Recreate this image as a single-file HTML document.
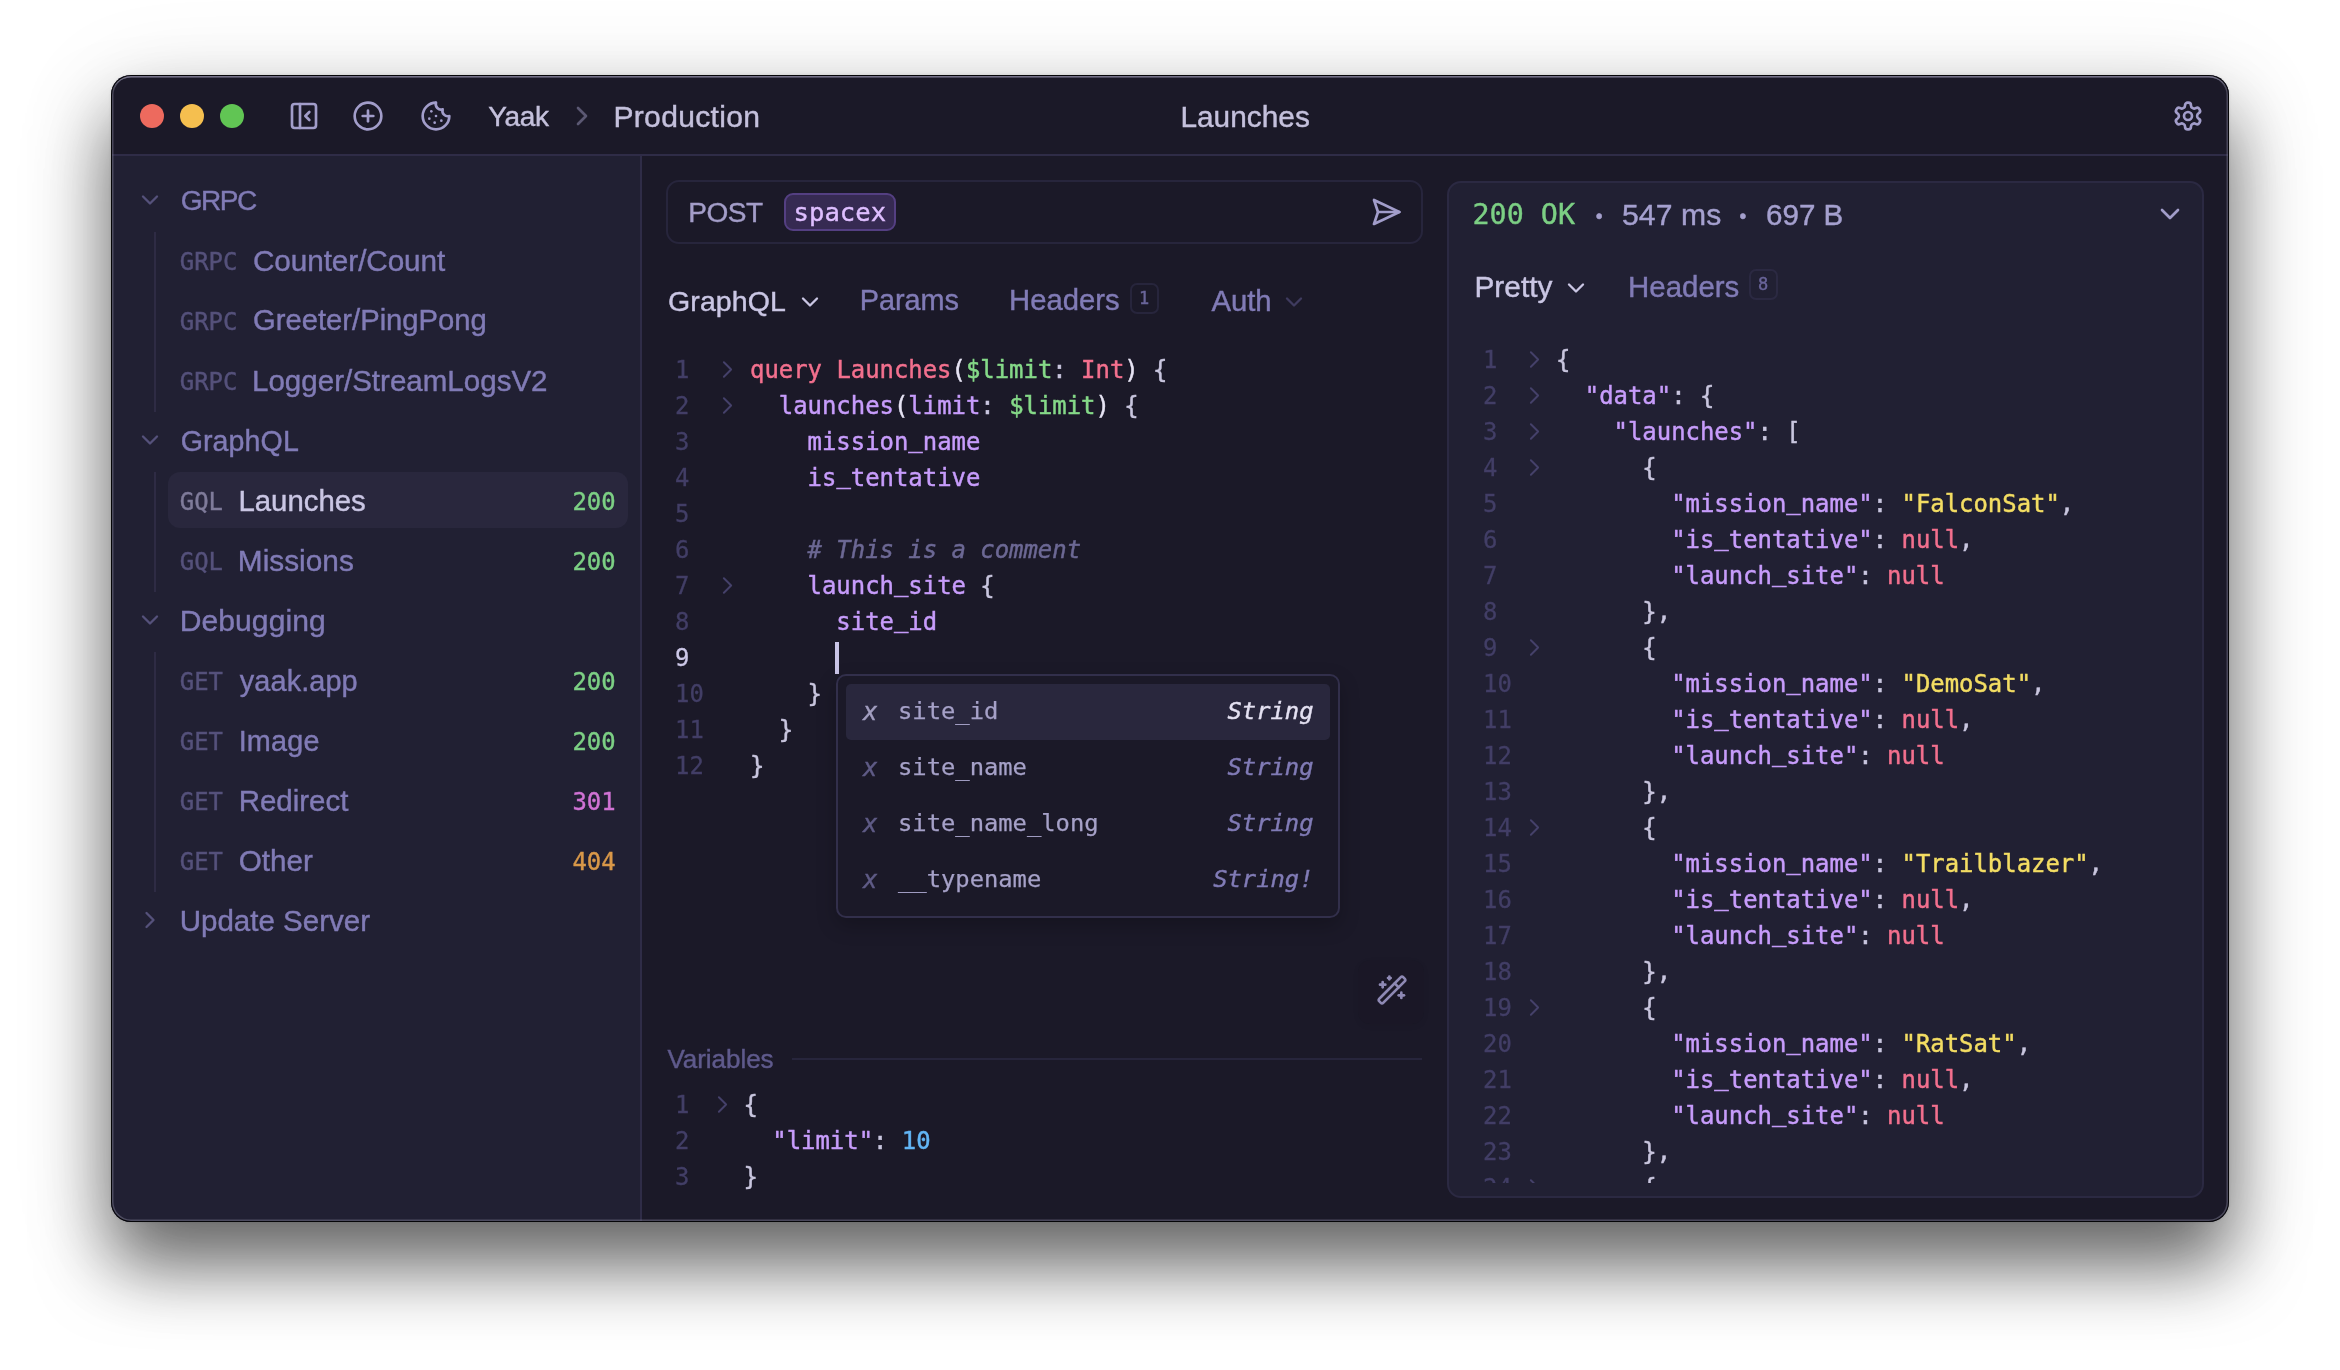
<!DOCTYPE html>
<html lang="en"><head><meta charset="utf-8"><title>Yaak</title>
<style>
*{box-sizing:border-box;margin:0;padding:0}
html,body{width:2340px;height:1370px;overflow:hidden;background:#fff}
body{font-family:"Liberation Sans", sans-serif;position:relative}
#shadow{position:absolute;left:111px;top:75px;width:2118px;height:1147px;border-radius:20px;
  box-shadow:0 44px 70px rgba(0,0,0,.55), 0 20px 100px rgba(0,0,0,.15), 0 0 3px rgba(0,0,0,.12);}
#win{position:absolute;left:111px;top:75px;width:2118px;height:1147px;border-radius:20px;overflow:hidden;background:#1b1928;will-change:transform}
#winedge{position:absolute;left:111px;top:75px;width:2118px;height:1147px;border-radius:20px;pointer-events:none;
  box-shadow:inset 0 0 0 1px #050508, inset 0 2.5px 0 0 rgba(135,133,155,.7), inset 0 0 0 2.5px rgba(120,118,140,.5);}
#hdr{position:absolute;left:0;top:0;width:2118px;height:81px;border-bottom:2px solid #2f2c47;background:#1b1928}
#side{position:absolute;left:0;top:81px;width:531px;height:1066px;background:#212033;border-right:2px solid #2f2c47}
.t{position:absolute;white-space:pre;line-height:1;-webkit-text-stroke:.42px currentColor}
.mono{font-family:"DejaVu Sans Mono", "Liberation Mono", monospace;-webkit-text-stroke:.4px currentColor}
.dot{position:absolute;width:24px;height:24px;border-radius:50%;top:29px}
.box{position:absolute}
svg{position:absolute;overflow:visible;fill:none;stroke-linecap:round;stroke-linejoin:round}
.code{position:absolute;font-family:"DejaVu Sans Mono", "Liberation Mono", monospace;font-size:23.92px;line-height:36px;white-space:pre;color:#c9c6df;-webkit-text-stroke:.45px currentColor}
.code div{height:36px}
.ln{position:absolute;font-family:"DejaVu Sans Mono", "Liberation Mono", monospace;font-size:23.92px;line-height:36px;white-space:pre;color:#423e66;-webkit-text-stroke:.3px currentColor}
.ln div{height:36px}
.u{font-style:normal;position:relative;top:-3px}
.w{color:#e7e4f4}.k{color:#f3708e}.p{color:#c79cfb}.g{color:#85d988}.s{color:#f3dd63}.n{color:#62b5f5}.c{color:#6c6894;font-style:italic}
</style></head>
<body>
<div id="shadow"></div>
<div id="win">
<div id="hdr"></div>
<div id="side"></div>
<div class="dot" style="left:29px;background:#ed6a5e"></div>
<div class="dot" style="left:69px;background:#f5bf4f"></div>
<div class="dot" style="left:109px;background:#61c554"></div>
<svg style="left:177.00px;top:25.00px" width="32" height="32" viewBox="0 0 24 24" stroke="#a29dca" stroke-width="2"><rect width="18" height="18" x="3" y="3" rx="2"/><path d="M9 3v18"/><path d="m16 15-3-3 3-3"/></svg>
<svg style="left:241.00px;top:25.00px" width="32" height="32" viewBox="0 0 24 24" stroke="#a29dca" stroke-width="2"><circle cx="12" cy="12" r="10"/><path d="M8 12h8"/><path d="M12 8v8"/></svg>
<svg style="left:309.00px;top:25.00px" width="32" height="32" viewBox="0 0 24 24" stroke="#a29dca" stroke-width="2"><path d="M12 2a10 10 0 1 0 10 10 4 4 0 0 1-5-5 4 4 0 0 1-5-5"/><path d="M8.5 8.5v.01"/><path d="M16 15.5v.01"/><path d="M12 12v.01"/><path d="M11 17v.01"/><path d="M7 14v.01"/></svg>
<div class="t " style="left:377.20px;top:27.99px;font-size:28.02px;color:#c4c0dc;letter-spacing:-0.356px;">Yaak</div>
<svg style="left:455.20px;top:25.00px" width="32" height="32" viewBox="0 0 24 24" stroke="#5b5873" stroke-width="2"><path d="m9 18 6-6-6-6"/></svg>
<div class="t " style="left:502.40px;top:26.95px;font-size:30.09px;color:#c4c0dc;letter-spacing:0.315px;">Production</div>
<div class="t " style="left:1069.40px;top:27.09px;font-size:29.81px;color:#c4c0dc;letter-spacing:0.025px;">Launches</div>
<svg style="left:2061.00px;top:25.00px" width="32" height="32" viewBox="0 0 24 24" stroke="#a29dca" stroke-width="2"><path d="M12.22 2h-.44a2 2 0 0 0-2 2v.18a2 2 0 0 1-1 1.73l-.43.25a2 2 0 0 1-2 0l-.15-.08a2 2 0 0 0-2.73.73l-.22.38a2 2 0 0 0 .73 2.73l.15.1a2 2 0 0 1 1 1.72v.51a2 2 0 0 1-1 1.74l-.15.09a2 2 0 0 0-.73 2.73l.22.38a2 2 0 0 0 2.73.73l.15-.08a2 2 0 0 1 2 0l.43.25a2 2 0 0 1 1 1.73V20a2 2 0 0 0 2 2h.44a2 2 0 0 0 2-2v-.18a2 2 0 0 1 1-1.73l.43-.25a2 2 0 0 1 2 0l.15.08a2 2 0 0 0 2.73-.73l.22-.39a2 2 0 0 0-.73-2.73l-.15-.08a2 2 0 0 1-1-1.74v-.5a2 2 0 0 1 1-1.74l.15-.09a2 2 0 0 0 .73-2.73l-.22-.38a2 2 0 0 0-2.73-.73l-.15.08a2 2 0 0 1-2 0l-.43-.25a2 2 0 0 1-1-1.73V4a2 2 0 0 0-2-2z"/><circle cx="12" cy="12" r="3"/></svg>
<div class="box" style="left:57px;top:397px;width:460px;height:56px;background:#29273d;border-radius:12px"></div>
<div class="box" style="left:42.5px;top:157px;width:2.0px;height:180px;background:#2e2b44"></div>
<div class="box" style="left:42.5px;top:397px;width:2.0px;height:120px;background:#2e2b44"></div>
<div class="box" style="left:42.5px;top:577px;width:2.0px;height:240px;background:#2e2b44"></div>
<svg style="left:25.00px;top:111.00px" width="28" height="28" viewBox="0 0 24 24" stroke="#55517b" stroke-width="2"><path d="m6 9 6 6 6-6"/></svg>
<div class="t " style="left:69.70px;top:111.99px;font-size:28.02px;color:#817bb6;letter-spacing:-1.470px;">GRPC</div>
<div class="t mono" style="left:68.80px;top:175.84px;font-size:23.92px;color:#55517b;">GRPC</div>
<div class="t " style="left:142.00px;top:171.15px;font-size:29.71px;color:#817bb6;letter-spacing:-0.078px;">Counter/Count</div>
<div class="t mono" style="left:68.80px;top:235.84px;font-size:23.92px;color:#55517b;">GRPC</div>
<div class="t " style="left:142.00px;top:231.38px;font-size:29.23px;color:#817bb6;letter-spacing:-0.003px;">Greeter/PingPong</div>
<div class="t mono" style="left:68.80px;top:295.84px;font-size:23.92px;color:#55517b;">GRPC</div>
<div class="t " style="left:141.00px;top:291.24px;font-size:29.53px;color:#817bb6;letter-spacing:0.010px;">Logger/StreamLogsV2</div>
<svg style="left:25.00px;top:351.00px" width="28" height="28" viewBox="0 0 24 24" stroke="#55517b" stroke-width="2"><path d="m6 9 6 6 6-6"/></svg>
<div class="t " style="left:69.70px;top:351.71px;font-size:28.58px;color:#817bb6;letter-spacing:0.091px;">GraphQL</div>
<div class="t mono" style="left:68.80px;top:415.84px;font-size:23.92px;color:#7f7b9a;">GQL</div>
<div class="t " style="left:127.40px;top:411.31px;font-size:29.38px;color:#cac6e4;letter-spacing:-0.001px;">Launches</div>
<div class="t mono" style="left:461.40px;top:415.84px;font-size:23.92px;color:#7ccf84;">200</div>
<div class="t mono" style="left:68.80px;top:475.84px;font-size:23.92px;color:#55517b;">GQL</div>
<div class="t " style="left:126.80px;top:471.11px;font-size:29.79px;color:#817bb6;letter-spacing:0.022px;">Missions</div>
<div class="t mono" style="left:461.40px;top:475.84px;font-size:23.92px;color:#7ccf84;">200</div>
<svg style="left:25.00px;top:531.00px" width="28" height="28" viewBox="0 0 24 24" stroke="#55517b" stroke-width="2"><path d="m6 9 6 6 6-6"/></svg>
<div class="t " style="left:68.70px;top:530.96px;font-size:30.09px;color:#817bb6;letter-spacing:0.066px;">Debugging</div>
<div class="t mono" style="left:68.80px;top:595.84px;font-size:23.92px;color:#55517b;">GET</div>
<div class="t " style="left:128.80px;top:591.56px;font-size:28.88px;color:#817bb6;letter-spacing:0.095px;">yaak.app</div>
<div class="t mono" style="left:461.40px;top:595.84px;font-size:23.92px;color:#7ccf84;">200</div>
<div class="t mono" style="left:68.80px;top:655.84px;font-size:23.92px;color:#55517b;">GET</div>
<div class="t " style="left:127.70px;top:651.60px;font-size:28.8px;color:#817bb6;letter-spacing:0.170px;">Image</div>
<div class="t mono" style="left:461.40px;top:655.84px;font-size:23.92px;color:#7ccf84;">200</div>
<div class="t mono" style="left:68.80px;top:715.84px;font-size:23.92px;color:#55517b;">GET</div>
<div class="t " style="left:127.70px;top:711.27px;font-size:29.46px;color:#817bb6;letter-spacing:0.001px;">Redirect</div>
<div class="t mono" style="left:461.40px;top:715.84px;font-size:23.92px;color:#d072d4;">301</div>
<div class="t mono" style="left:68.80px;top:775.84px;font-size:23.92px;color:#55517b;">GET</div>
<div class="t " style="left:127.80px;top:771.18px;font-size:29.64px;color:#817bb6;letter-spacing:0.018px;">Other</div>
<div class="t mono" style="left:461.40px;top:775.84px;font-size:23.92px;color:#d99849;">404</div>
<svg style="left:25.00px;top:831.00px" width="28" height="28" viewBox="0 0 24 24" stroke="#55517b" stroke-width="2"><path d="m9 18 6-6-6-6"/></svg>
<div class="t " style="left:68.70px;top:831.24px;font-size:29.52px;color:#817bb6;letter-spacing:0.002px;">Update Server</div>
<div class="box" style="left:555px;top:105px;width:757px;height:64px;border:2px solid #27253c;border-radius:13px"></div>
<div class="t " style="left:577.20px;top:123.99px;font-size:28.02px;color:#a39dc8;letter-spacing:-0.488px;">POST</div>
<div class="box" style="left:673px;top:118px;width:112px;height:38px;background:#362a52;border:2px solid #543f82;border-radius:9px"></div>
<div class="t mono" style="left:682.60px;top:125.20px;font-size:25.6px;color:#debeff;">spacex</div>
<svg style="left:1258.50px;top:121.00px" width="32" height="32" viewBox="0 0 24 24" stroke="#a29dca" stroke-width="2"><path d="m3 3 3 9-3 9 19-9Z"/><path d="M6 12h16"/></svg>
<div class="t " style="left:557.10px;top:211.55px;font-size:28.51px;color:#cac6e4;letter-spacing:0.087px;">GraphQL</div>
<svg style="left:685.30px;top:213.00px" width="28" height="28" viewBox="0 0 24 24" stroke="#cac6e4" stroke-width="2"><path d="m6 9 6 6 6-6"/></svg>
<div class="t " style="left:748.80px;top:211.38px;font-size:28.85px;color:#817bb6;letter-spacing:-0.051px;">Params</div>
<div class="t " style="left:898.10px;top:211.18px;font-size:29.24px;color:#817bb6;letter-spacing:-0.014px;">Headers</div>
<div class="box" style="left:1019px;top:208px;width:29px;height:31px;border:2px solid #27253c;border-radius:7px"></div>
<div class="t mono" style="left:1028.00px;top:214.50px;font-size:17px;color:#6a659a;">1</div>
<div class="t " style="left:1100.40px;top:211.15px;font-size:29.31px;color:#817bb6;letter-spacing:-0.025px;">Auth</div>
<svg style="left:1169.30px;top:213.00px" width="28" height="28" viewBox="0 0 24 24" stroke="#3f3b5f" stroke-width="2"><path d="m6 9 6 6 6-6"/></svg>
<div class="ln" style="left:564px;top:277px"><div>1</div><div>2</div><div>3</div><div>4</div><div>5</div><div>6</div><div>7</div><div>8</div><div style=color:#cdc8e8>9</div><div>10</div><div>11</div><div>12</div></div>
<div class="code" style="left:639px;top:277px"><div><span class="k">query</span> <span class="k">Launches</span><span class="w">(</span><span class="g">$limit</span>: <span class="k">Int</span><span class="w">)</span> {</div><div>  <span class="p">launches</span><span class="w">(</span><span class="p">limit</span>: <span class="g">$limit</span><span class="w">)</span> {</div><div>    <span class="p">mission<i class="u">_</i>name</span></div><div>    <span class="p">is<i class="u">_</i>tentative</span></div><div> </div><div>    <span class="c"># This is a comment</span></div><div>    <span class="p">launch<i class="u">_</i>site</span> {</div><div>      <span class="p">site<i class="u">_</i>id</span></div><div>      </div><div>    }</div><div>  }</div><div>}</div></div>
<svg style="left:602.00px;top:279.50px" width="29" height="29" viewBox="0 0 24 24" stroke="#45416a" stroke-width="1.6"><path d="m9 18 6-6-6-6"/></svg>
<svg style="left:602.00px;top:315.50px" width="29" height="29" viewBox="0 0 24 24" stroke="#45416a" stroke-width="1.6"><path d="m9 18 6-6-6-6"/></svg>
<svg style="left:602.00px;top:495.50px" width="29" height="29" viewBox="0 0 24 24" stroke="#45416a" stroke-width="1.6"><path d="m9 18 6-6-6-6"/></svg>
<div class="box" style="left:724px;top:567px;width:4px;height:32px;background:#c9c4e6"></div>
<div class="box" style="left:725px;top:599px;width:504px;height:244px;background:#1b1928;border:2px solid #322f4b;border-radius:10px;box-shadow:0 8px 20px rgba(0,0,0,.22)"></div>
<div class="box" style="left:735px;top:609px;width:484px;height:56px;background:#29273d;border-radius:5px"></div>
<div class="t mono" style="left:752.00px;top:625.00px;font-size:24px;color:#a29ec0;font-style:italic;">x</div>
<div class="t mono" style="left:787.00px;top:625.10px;font-size:23.8px;color:#a6a1c8;-webkit-text-stroke:.25px currentColor;">site_id</div>
<div class="t mono" style="left:1116.52px;top:625.10px;font-size:23.8px;color:#e4e1f2;font-style:italic;">String</div>
<div class="t mono" style="left:752.00px;top:681.00px;font-size:24px;color:#5f5b86;font-style:italic;">x</div>
<div class="t mono" style="left:787.00px;top:681.10px;font-size:23.8px;color:#a6a1c8;-webkit-text-stroke:.25px currentColor;">site_name</div>
<div class="t mono" style="left:1116.52px;top:681.10px;font-size:23.8px;color:#817bb6;font-style:italic;">String</div>
<div class="t mono" style="left:752.00px;top:737.00px;font-size:24px;color:#5f5b86;font-style:italic;">x</div>
<div class="t mono" style="left:787.00px;top:737.10px;font-size:23.8px;color:#a6a1c8;-webkit-text-stroke:.25px currentColor;">site_name_long</div>
<div class="t mono" style="left:1116.52px;top:737.10px;font-size:23.8px;color:#817bb6;font-style:italic;">String</div>
<div class="t mono" style="left:752.00px;top:793.00px;font-size:24px;color:#5f5b86;font-style:italic;">x</div>
<div class="t mono" style="left:787.00px;top:793.10px;font-size:23.8px;color:#a6a1c8;-webkit-text-stroke:.25px currentColor;">__typename</div>
<div class="t mono" style="left:1102.19px;top:793.10px;font-size:23.8px;color:#817bb6;font-style:italic;">String!</div>
<div class="box" style="left:1247px;top:885px;width:66px;height:64px;background:rgba(10,8,20,.06);border-radius:12px;box-shadow:0 2px 6px rgba(0,0,0,.05)"></div>
<svg style="left:1265.00px;top:899.00px" width="32" height="32" viewBox="0 0 24 24" stroke="#8e89b4" stroke-width="2"><path d="m21.64 3.64-1.28-1.28a1.21 1.21 0 0 0-1.72 0L2.36 18.64a1.21 1.21 0 0 0 0 1.72l1.28 1.28a1.2 1.2 0 0 0 1.72 0L21.64 5.36a1.2 1.2 0 0 0 0-1.72"/><path d="m14 7 3 3"/><path d="M5 6v4"/><path d="M19 14v4"/><path d="M10 2v2"/><path d="M7 8H3"/><path d="M21 16h-4"/><path d="M11 3H9"/></svg>
<div class="t " style="left:556.40px;top:971.00px;font-size:26.01px;color:#5f5a8c;letter-spacing:-0.033px;">Variables</div>
<div class="box" style="left:681px;top:983px;width:630px;height:2px;background:#27253c"></div>
<div class="ln" style="left:564px;top:1012px"><div>1</div><div>2</div><div>3</div></div>
<div class="code" style="left:632.5px;top:1012px"><div>{</div><div>  <span class="p">&quot;limit&quot;</span>: <span class="n">10</span></div><div>}</div></div>
<svg style="left:596.50px;top:1014.50px" width="29" height="29" viewBox="0 0 24 24" stroke="#45416a" stroke-width="1.6"><path d="m9 18 6-6-6-6"/></svg>
<div class="box" style="left:1336px;top:106px;width:757px;height:1017px;background:#212033;border:2px solid #2b2942;border-radius:14px"></div>
<div class="t mono" style="left:1361.50px;top:126.30px;font-size:28.4px;color:#7ccf84;">200 OK</div>
<div class="t " style="left:1484.80px;top:131.75px;font-size:19.5px;color:#a5a0cd;">•</div>
<div class="t " style="left:1510.90px;top:124.95px;font-size:30.09px;color:#a5a0cf;letter-spacing:0.141px;">547 ms</div>
<div class="t " style="left:1628.60px;top:131.75px;font-size:19.5px;color:#a5a0cd;">•</div>
<div class="t " style="left:1655.00px;top:125.22px;font-size:29.57px;color:#a5a0cf;letter-spacing:0.016px;">697 B</div>
<svg style="left:2042.50px;top:123.00px" width="32" height="32" viewBox="0 0 24 24" stroke="#a29dca" stroke-width="2"><path d="m6 9 6 6 6-6"/></svg>
<div class="t " style="left:1363.40px;top:197.07px;font-size:29.85px;color:#cac6e4;letter-spacing:0.035px;">Pretty</div>
<svg style="left:1451.00px;top:198.50px" width="28" height="28" viewBox="0 0 24 24" stroke="#cac6e4" stroke-width="2"><path d="m6 9 6 6 6-6"/></svg>
<div class="t " style="left:1517.10px;top:197.28px;font-size:29.43px;color:#817bb6;letter-spacing:0.000px;">Headers</div>
<div class="box" style="left:1638px;top:194px;width:29px;height:31px;border:2px solid #2b2942;border-radius:7px"></div>
<div class="t mono" style="left:1647.00px;top:200.50px;font-size:17px;color:#6a659a;">8</div>
<div class="box" style="left:1338px;top:255px;width:753px;height:853px;overflow:hidden">
<div class="ln" style="left:34px;top:12px"><div>1</div><div>2</div><div>3</div><div>4</div><div>5</div><div>6</div><div>7</div><div>8</div><div>9</div><div>10</div><div>11</div><div>12</div><div>13</div><div>14</div><div>15</div><div>16</div><div>17</div><div>18</div><div>19</div><div>20</div><div>21</div><div>22</div><div>23</div><div>24</div></div>
<div class="code" style="left:107px;top:12px"><div>{</div><div>  <span class="p">&quot;data&quot;</span>: {</div><div>    <span class="p">&quot;launches&quot;</span>: [</div><div>      {</div><div>        <span class="p">&quot;mission<i class="u">_</i>name&quot;</span>: <span class="s">&quot;FalconSat&quot;</span>,</div><div>        <span class="p">&quot;is<i class="u">_</i>tentative&quot;</span>: <span class="k">null</span>,</div><div>        <span class="p">&quot;launch<i class="u">_</i>site&quot;</span>: <span class="k">null</span></div><div>      },</div><div>      {</div><div>        <span class="p">&quot;mission<i class="u">_</i>name&quot;</span>: <span class="s">&quot;DemoSat&quot;</span>,</div><div>        <span class="p">&quot;is<i class="u">_</i>tentative&quot;</span>: <span class="k">null</span>,</div><div>        <span class="p">&quot;launch<i class="u">_</i>site&quot;</span>: <span class="k">null</span></div><div>      },</div><div>      {</div><div>        <span class="p">&quot;mission<i class="u">_</i>name&quot;</span>: <span class="s">&quot;Trailblazer&quot;</span>,</div><div>        <span class="p">&quot;is<i class="u">_</i>tentative&quot;</span>: <span class="k">null</span>,</div><div>        <span class="p">&quot;launch<i class="u">_</i>site&quot;</span>: <span class="k">null</span></div><div>      },</div><div>      {</div><div>        <span class="p">&quot;mission<i class="u">_</i>name&quot;</span>: <span class="s">&quot;RatSat&quot;</span>,</div><div>        <span class="p">&quot;is<i class="u">_</i>tentative&quot;</span>: <span class="k">null</span>,</div><div>        <span class="p">&quot;launch<i class="u">_</i>site&quot;</span>: <span class="k">null</span></div><div>      },</div><div>      {</div></div>
<svg style="left:71.00px;top:14.50px" width="29" height="29" viewBox="0 0 24 24" stroke="#45416a" stroke-width="1.6"><path d="m9 18 6-6-6-6"/></svg>
<svg style="left:71.00px;top:50.50px" width="29" height="29" viewBox="0 0 24 24" stroke="#45416a" stroke-width="1.6"><path d="m9 18 6-6-6-6"/></svg>
<svg style="left:71.00px;top:86.50px" width="29" height="29" viewBox="0 0 24 24" stroke="#45416a" stroke-width="1.6"><path d="m9 18 6-6-6-6"/></svg>
<svg style="left:71.00px;top:122.50px" width="29" height="29" viewBox="0 0 24 24" stroke="#45416a" stroke-width="1.6"><path d="m9 18 6-6-6-6"/></svg>
<svg style="left:71.00px;top:302.50px" width="29" height="29" viewBox="0 0 24 24" stroke="#45416a" stroke-width="1.6"><path d="m9 18 6-6-6-6"/></svg>
<svg style="left:71.00px;top:482.50px" width="29" height="29" viewBox="0 0 24 24" stroke="#45416a" stroke-width="1.6"><path d="m9 18 6-6-6-6"/></svg>
<svg style="left:71.00px;top:662.50px" width="29" height="29" viewBox="0 0 24 24" stroke="#45416a" stroke-width="1.6"><path d="m9 18 6-6-6-6"/></svg>
<svg style="left:71.00px;top:842.50px" width="29" height="29" viewBox="0 0 24 24" stroke="#45416a" stroke-width="1.6"><path d="m9 18 6-6-6-6"/></svg>
</div>
</div>
<div id="winedge"></div>
</body></html>
